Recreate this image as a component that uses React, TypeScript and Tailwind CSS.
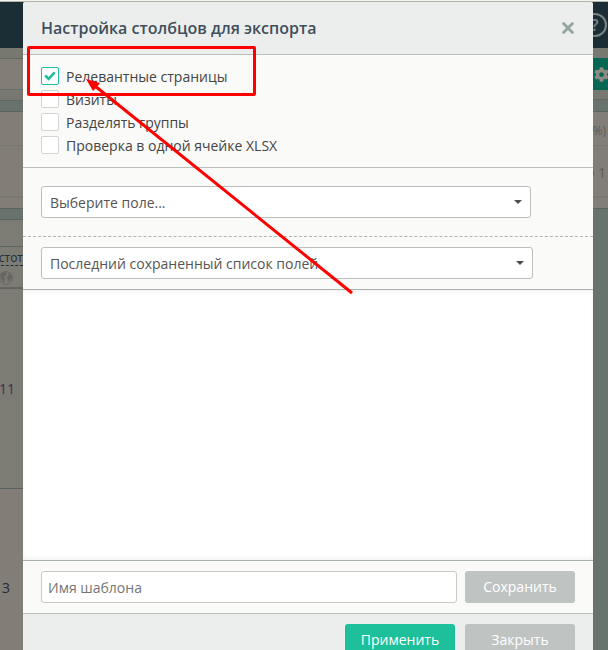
import React, { useState } from "react";
import { FaCog } from "react-icons/fa";

const OPTIONS = [
  { id: "relevant", label: "Релевантные страницы" },
  { id: "visits", label: "Визиты" },
  { id: "groups", label: "Разделять группы" },
  { id: "xlsx", label: "Проверка в одной ячейке XLSX" },
];

type SelectProps = {
  name: string;
  label: string;
  className: string;
};

const FieldSelect = ({ name, label, className }: SelectProps) => (
  <div className={`relative ${className}`}>
    <select
      name={name}
      aria-label={label}
      className="block h-8 w-full appearance-none rounded-[3px] border border-[#bcbfbd] bg-white pt-px pr-8 pl-2 text-sm text-[#555555] outline-none"
    >
      <option>{label}</option>
    </select>
    <svg
      className="pointer-events-none absolute top-[14px] right-[9px] h-1 w-2"
      viewBox="0 0 8 4"
    >
      <path d="M0 0h8L4 4z" fill="#4b4b4b" />
    </svg>
  </div>
);

const GlobeIcon = () => (
  <svg className="-ml-px h-[14px] w-[14px] shrink-0" viewBox="0 0 14 14">
    <circle cx="7" cy="7" r="6.5" fill="#7a7972" stroke="#696963" />
    <path
      d="M1.5 4.5L4 1.5L7 1.2L6.6 2.6L8 3.2L6 4.6L5.6 6L3.8 6.2L6.2 8L5.4 10L4.4 12L3.4 9L1.6 7ZM9 2L11 3L12.8 5.6L12.6 8L11.4 7.4L11 9.8L9.8 11L9.2 8.2L7.8 7.4L8.4 5.4L10 4.6Z"
      fill="#65655f"
    />
  </svg>
);

const PageLeft = () => (
  <div className="w-[23px] shrink-0 overflow-hidden bg-[#827d77] text-[#1e2d35]">
    <div className="h-[46px] bg-[#1b2e36]" />
    <div className="h-[11px] border-b border-[#62695f] bg-[#777971]" />
    <div className="h-[31px] border-b border-[#686e68]" />
    <div className="h-[11px] border-b border-[#5f6864] bg-[#777971]" />
    <div className="h-[11px] border-b border-[#59625e] bg-[#69736e]" />
    <div className="h-[34px] border-b border-[#787770]" />
    <div className="h-[52px] border-b-2 border-[#787770]" />
    <div className="h-[11px] border-b border-[#59625e]" />
    <div className="h-[11px] border-b border-[#59625e] bg-[#69736e]" />
    <div className="h-[27px] border-b border-[#5c6460] bg-[#7c7b74]" />
    <div className="h-[42px] border-b-2 border-[#62655f] bg-[#7c7b74] pt-[3px]">
      <div className="ml-px flex h-4 justify-end border-b border-dashed border-[#1e2d35] text-xs leading-4">
        стот
      </div>
      <div className="flex pt-[5px]">
        <GlobeIcon />
      </div>
    </div>
    <div className="flex h-[200px] items-center justify-end border-b border-[#59625e] bg-[#7c7b74] pr-2 text-sm text-[#34354c]">
      11
    </div>
    <div className="flex h-[198px] items-center justify-end pr-[13px] text-sm">
      3
    </div>
  </div>
);

const PageRight = () => (
  <div className="w-[15px] shrink-0 overflow-hidden bg-[#69736e] text-[#5c5d58]">
    <div className="flex h-[46px] items-center bg-[#1b2e36]">
      <div className="-ml-[10px] flex h-6 w-6 shrink-0 items-center justify-center rounded-full border-2 border-[#7b8583] text-base font-semibold text-[#7b8583]">
        ?
      </div>
    </div>
    <div className="h-[52px] border-b border-[#5f6864] bg-[#777971] pt-[10px]">
      <div className="flex h-8 items-center bg-[#056653] pt-px pl-px">
        <FaCog className="h-[15px] w-[15px] shrink-0 text-[#8c8a83]" />
      </div>
    </div>
    <div className="h-3 border-b border-[#59625e]" />
    <div className="flex h-[34px] items-center justify-end border-b border-[#787770] bg-[#827d77] pt-1 pr-[2px] text-xs">
      %)
    </div>
    <div className="flex h-[52px] items-center justify-end border-b-2 border-[#787770] bg-[#827d77] pt-1 pr-[2px]">
      <span className="mr-1 h-[10px] w-[10px] shrink-0 rounded-full bg-[#5c5d58]" />
      <span className="text-sm">1</span>
    </div>
    <div className="h-[11px] border-b border-[#59625e] bg-[#827d77]" />
  </div>
);

// Red frame and arrow drawn over the dialog
const Annotation = () => (
  <svg
    className="pointer-events-none absolute top-0 left-0 h-[300px] w-[360px]"
    viewBox="0 0 360 300"
  >
    <rect
      x="28.5"
      y="47.5"
      width="226"
      height="47"
      rx="0.5"
      fill="none"
      stroke="#ff0000"
      strokeWidth="3"
    />
    <path d="M352 293L95 86" stroke="#ff0000" strokeWidth="3" />
    <path d="M86 79L100 83L97 87L93 91Z" fill="#ff0000" />
  </svg>
);

const App = () => {
  const [checked, setChecked] = useState<string[]>(["relevant"]);
  const [templateName, setTemplateName] = useState("");

  const toggle = (id: string) => {
    setChecked((prev) =>
      prev.includes(id) ? prev.filter((x) => x !== id) : [...prev, id],
    );
  };

  const buttonStyles =
    "h-8 w-[110px] shrink-0 rounded-[3px] text-sm text-white outline-none";

  return (
    <div className="relative h-screen overflow-hidden bg-[#69736e] font-['Open_Sans','Noto_Sans',sans-serif]">
      <div className="h-[2px] border-b border-[#b6b5a9] bg-[#f4f4f0]" />
      <div className="flex">
        <PageLeft />
        <div
          role="dialog"
          aria-labelledby="dialog-title"
          className="min-w-0 flex-1 rounded-t-[3px] bg-[#fafaf8]"
        >
          <div className="flex h-[53px] items-center justify-between rounded-t-[3px] border-b border-[#b9bfbc] bg-[#eceeed] px-[18px]">
            <h1
              id="dialog-title"
              className="text-base font-semibold text-[#3f4f5c]"
            >
              Настройка столбцов для экспорта
            </h1>
            <button type="button" aria-label="Закрыть окно">
              <svg className="h-[14px] w-[14px]" viewBox="0 0 14 14">
                <path
                  d="M1.8 1.8l10.4 10.4M12.2 1.8l-10.4 10.4"
                  stroke="#95a5a0"
                  strokeWidth="2.8"
                />
              </svg>
            </button>
          </div>

          <div className="flex flex-col gap-[5px] border-b border-[#b9bfbc] px-[18px] pt-3 pb-[13px]">
            {OPTIONS.map((o) => (
              <div key={o.id} className="flex h-[18px] items-center">
                <span className="relative h-[18px] w-[18px]">
                  <input
                    id={o.id}
                    type="checkbox"
                    checked={checked.includes(o.id)}
                    onChange={() => toggle(o.id)}
                    className="block h-[18px] w-[18px] appearance-none rounded-[2px] border border-[#d3d5d3] bg-white checked:border-[#1fbf9a]"
                  />
                  {checked.includes(o.id) && (
                    <svg
                      className="pointer-events-none absolute inset-0 h-[18px] w-[18px]"
                      viewBox="0 0 18 18"
                    >
                      <path
                        d="M4.2 8.5L7.6 11.8L13.7 5.3"
                        fill="none"
                        stroke="#1fbf9a"
                        strokeWidth="2.6"
                      />
                    </svg>
                  )}
                </span>
                <label
                  htmlFor={o.id}
                  className="pt-[2px] pl-[7px] text-sm leading-5 text-[#444444]"
                >
                  {o.label}
                </label>
              </div>
            ))}
          </div>

          <div className="border-b border-dashed border-[#b3b3b1] px-[18px] py-[18px]">
            <FieldSelect name="field" label="Выберите поле..." className="mr-11" />
          </div>
          <div className="border-b border-[#aab2ae] px-[18px] py-[10px]">
            <FieldSelect
              name="saved"
              label="Последний сохраненный список полей"
              className="mr-[42px]"
            />
          </div>

          <div className="h-[270px] bg-white shadow-[inset_0_4px_6px_-3px_#eeeeee,inset_0_-4px_6px_-3px_#eeeeee]" />

          <div className="flex gap-2 border-y border-t-[#aab2ae] border-b-[#b9bfbc] px-[18px] py-[10px]">
            <input
              type="text"
              aria-label="Имя шаблона"
              placeholder="Имя шаблона"
              value={templateName}
              onChange={(e) => setTemplateName(e.target.value)}
              className="h-8 min-w-0 flex-1 rounded-[3px] border border-[#c9cbc3] bg-white px-[6px] pt-px text-sm text-[#444444] outline-none placeholder:text-[#757575]"
            />
            <button type="button" className={`${buttonStyles} bg-[#bfc4c3]`}>
              Сохранить
            </button>
          </div>
          <div className="flex justify-end gap-[10px] bg-[#eceeed] px-[18px] py-[10px]">
            <button type="button" className={`${buttonStyles} bg-[#1dc09a]`}>
              Применить
            </button>
            <button type="button" className={`${buttonStyles} bg-[#bfc4c3]`}>
              Закрыть
            </button>
          </div>
        </div>
        <PageRight />
      </div>
      <Annotation />
    </div>
  );
};

export default App;
